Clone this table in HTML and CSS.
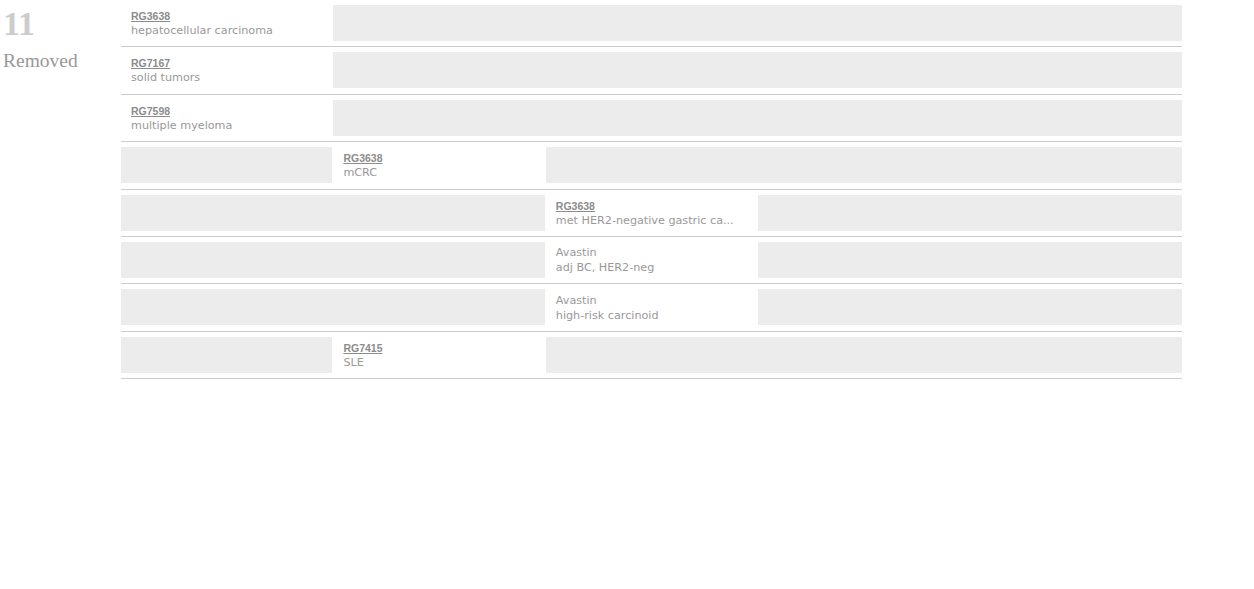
FILE: index.html
```html
<!DOCTYPE html>
<html lang="en">
<head>
    <meta charset="UTF-8">
    <title>Removed</title>
    <link rel="stylesheet" href="styles.css">
</head>
<body>

    <div class="page">
        <div class="summary">
            <div class="count">11</div>
            <div class="label">Removed</div>
        </div>

        <div class="timeline">
            <div class="row">
                <div class="cell c1"><a href="#">RG3638</a><span>hepatocellular carcinoma</span></div>
                <div class="cell fill c2-5"></div>
            </div>
            <div class="row">
                <div class="cell c1"><a href="#">RG7167</a><span>solid tumors</span></div>
                <div class="cell fill c2-5"></div>
            </div>
            <div class="row">
                <div class="cell c1"><a href="#">RG7598</a><span>multiple myeloma</span></div>
                <div class="cell fill c2-5"></div>
            </div>
            <div class="row">
                <div class="cell fill c1"></div>
                <div class="cell c2"><a href="#">RG3638</a><span>mCRC</span></div>
                <div class="cell fill c3-5"></div>
            </div>
            <div class="row">
                <div class="cell fill c1-2"></div>
                <div class="cell c3"><a href="#">RG3638</a><span>met HER2-negative gastric ca...</span></div>
                <div class="cell fill c4-5"></div>
            </div>
            <div class="row">
                <div class="cell fill c1-2"></div>
                <div class="cell c3"><span>Avastin</span><span>adj BC, HER2-neg</span></div>
                <div class="cell fill c4-5"></div>
            </div>
            <div class="row">
                <div class="cell fill c1-2"></div>
                <div class="cell c3"><span>Avastin</span><span>high-risk carcinoid</span></div>
                <div class="cell fill c4-5"></div>
            </div>
            <div class="row">
                <div class="cell fill c1"></div>
                <div class="cell c2"><a href="#">RG7415</a><span>SLE</span></div>
                <div class="cell fill c3-5"></div>
            </div>
        </div>
    </div>

</body>
</html>
```

FILE: styles.css
```css
body {
    margin: 0;
    background: #ffffff;
    font-family: "DejaVu Sans", Verdana, sans-serif;
}

.page {
    display: flex;
    align-items: flex-start;
}

.summary {
    width: 118px;
    padding-left: 3px;
    font-family: "Liberation Serif", "Times New Roman", serif;
}

.count {
    font-size: 34px;
    font-weight: bold;
    color: #cccccc;
    line-height: 40px;
    margin-top: 4px;
}

.label {
    font-size: 19.5px;
    color: #999999;
    line-height: 22px;
    margin-top: 6px;
}

.timeline {
    width: 1061px;
}

.row {
    display: grid;
    grid-template-columns: repeat(5, 1fr);
    column-gap: 1px;
    padding: 5px 0 5.4px;
    border-bottom: 1px solid #cccccc;
}

.cell {
    height: 36px;
    box-sizing: border-box;
    display: flex;
    flex-direction: column;
    justify-content: center;
    padding: 1px 10px 0;
    font-size: 11.2px;
    line-height: 15px;
    color: #999999;
    white-space: nowrap;
    overflow: hidden;
}

.cell a {
    font-family: "Liberation Sans", Arial, sans-serif;
    font-size: 10.5px;
    font-weight: bold;
    color: #8c8c8c;
    line-height: 14px;
}

.fill {
    background-color: #ececec;
}

.c1 { grid-column: 1; }
.c2 { grid-column: 2; }
.c3 { grid-column: 3; }
.c1-2 { grid-column: 1 / 3; }
.c2-5 { grid-column: 2 / 6; }
.c3-5 { grid-column: 3 / 6; }
.c4-5 { grid-column: 4 / 6; }
```
